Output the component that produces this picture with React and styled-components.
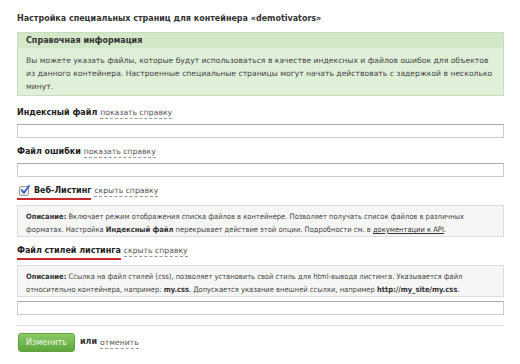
import React from 'react';
import styled, { createGlobalStyle } from 'styled-components';

const Global = createGlobalStyle`
    html, body {
        margin: 0;
        padding: 0;
        background: #fff;
    }
    body {
        font-family: "DejaVu Sans", Verdana, sans-serif;
        color: #333;
    }
`

const infoLines = [
    'Вы можете указать файлы, которые будут использоваться в качестве индексных и файлов ошибок для объектов',
    'из данного контейнера. Настроенные специальные страницы могут начать действовать с задержкой в несколько',
    'минут.',
]

export default function App() {
    return (
        <Page>
            <Global />
            <Title>Настройка специальных страниц для контейнера «demotivators»</Title>

            <InfoBox>
                <InfoHead>Справочная информация</InfoHead>
                <InfoBody>
                    {infoLines.map((line, i) => <Line key={i}>{line}</Line>)}
                </InfoBody>
            </InfoBox>

            <Field>
                <Label>Индексный файл <Toggle>показать справку</Toggle></Label>
                <Input />
            </Field>

            <Field>
                <Label>Файл ошибки <Toggle>показать справку</Toggle></Label>
                <Input />
            </Field>

            <Field>
                <Label $marked>
                    <Marked>
                        <CheckBox>
                            <svg width="10" height="10" viewBox="0 0 10 10">
                                <path d="M1.6 5 L4 7.8 L9 0.8" fill="none" stroke="#2a5fc8" strokeWidth="1.8" strokeLinecap="round" strokeLinejoin="round" />
                            </svg>
                        </CheckBox>
                        Веб-Листинг
                    </Marked>
                    <Toggle>скрыть справку</Toggle>
                </Label>
                <Help>
                    <Line><b>Описание:</b> Включает режим отображения списка файлов в контейнере. Позволяет получать список файлов в различных</Line>
                    <Line>форматах. Настройка <b>Индексный файл</b> перекрывает действие этой опции. Подробности см. в <DocLink>документации к API</DocLink>.</Line>
                </Help>
            </Field>

            <Field>
                <Label $marked>
                    <Marked>Файл стилей листинга</Marked>
                    <Toggle>скрыть справку</Toggle>
                </Label>
                <Help $gap={4}>
                    <Line><b>Описание:</b> Ссылка на файл стилей (css), позволяет установить свой стиль для html-вывода листинга. Указывается файл</Line>
                    <Line>относительно контейнера, например: <b>my.css</b>. Допускается указание внешней ссылки, например <b>http://my_site/my.css</b>.</Line>
                </Help>
                <Input />
            </Field>

            <Actions>
                <Button>Изменить</Button>
                <Or>или <Toggle>отменить</Toggle></Or>
            </Actions>
        </Page>
    )
}

const Page = styled.div`
    width: 487px;
    padding: 13px 16px 0 17px;
`

const Title = styled.div`
    font-size: 8px;
    line-height: 12px;
    font-weight: bold;
    color: #333;
    margin-bottom: 7px;
`

const InfoBox = styled.div`
    background: #dff0d8;
    border: 1px solid #c8dcbe;
    margin-bottom: 11px;
`

const InfoHead = styled.div`
    background: #d3e7c9;
    font-size: 8px;
    font-weight: bold;
    color: #333;
    padding: 0 8px;
    height: 15px;
    line-height: 15px;
`

const InfoBody = styled.div`
    font-size: 7.65px;
    line-height: 13px;
    color: #444;
    padding: 6px 8px 2px;
`

const Line = styled.div`
    white-space: nowrap;
`

const Field = styled.div`
    margin-bottom: 8px;
`

const Label = styled.div`
    display: flex;
    align-items: flex-start;
    gap: 3px;
    font-size: 8px;
    line-height: 12px;
    font-weight: bold;
    color: #222;
    margin-bottom: 5px;
`

const Marked = styled.span`
    display: inline-flex;
    align-items: center;
    gap: 5px;
    padding-bottom: 1px;
    border-bottom: 2px solid #c9292b;
`

const CheckBox = styled.span`
    display: inline-flex;
    align-items: center;
    justify-content: center;
    width: 8px;
    height: 8px;
    margin-left: 2px;
    border: 1px solid #999;
    border-radius: 2px;
    background: linear-gradient(#fff, #e6e6e6);
    svg { margin: -2px -2px 0 0; }
`

const Toggle = styled.span`
    font-size: 7.7px;
    font-weight: normal;
    color: #555;
    border-bottom: 1px dashed #999;
    line-height: 11px;
`

const Input = styled.div`
    height: 12px;
    border: 1px solid #ccc;
    border-top-color: #aaa;
    background: #fff;
`

const Help = styled.div`
    background: #f6f6f6;
    border: 1px solid #ddd;
    padding: 4px 8px 0;
    font-family: "DejaVu Sans Condensed", "DejaVu Sans", sans-serif;
    font-size: 7.5px;
    line-height: 13px;
    color: #444;
    margin-bottom: ${p => p.$gap || 0}px;
    b { color: #333; }
`

const DocLink = styled.span`
    color: #333;
    text-decoration: underline;
`

const Actions = styled.div`
    display: flex;
    align-items: center;
    gap: 5px;
    border-top: 1px solid #ddd;
    margin-top: 10px;
    padding-top: 7px;
`

const Button = styled.div`
    background: linear-gradient(#8ccb66, #5ea63c);
    border: 1px solid #62a043;
    border-radius: 3px;
    color: #eef8e6;
    font-size: 8px;
    padding: 0 7px;
    height: 17px;
    line-height: 17px;
    margin-left: 1px;
`

const Or = styled.span`
    font-size: 8px;
    font-weight: bold;
    color: #333;
    display: flex;
    gap: 3px;
`
